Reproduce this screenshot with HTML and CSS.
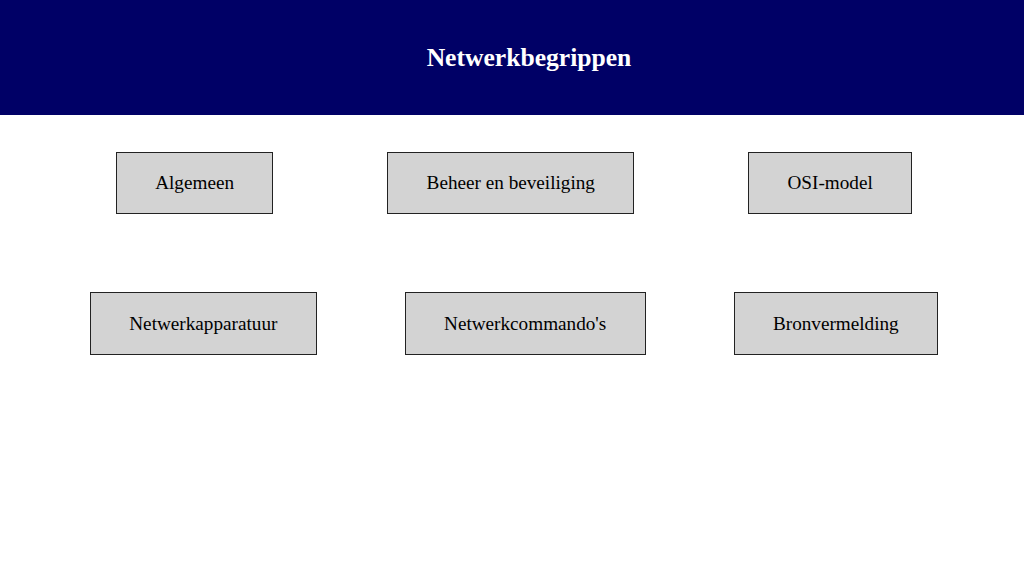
FILE: index.html
```html
<!DOCTYPE html>
<html lang="nl">
<head>
  <meta charset="UTF-8" />
  <meta name="viewport" content="width=device-width, initial-scale=1.0"/>
  <title>Netwerkbegrippen</title>
  <link rel="stylesheet" href="styles.css">
</head>
<body>
  <header>
    <h1>Netwerkbegrippen</h1>
  </header>

  <nav class="menu">
    <div class="menu-row">
      <a class="menu-item" href="#algemeen">Algemeen</a>
      <a class="menu-item" href="#beheer">Beheer en beveiliging</a>
      <a class="menu-item" href="#osi">OSI-model</a>
    </div>
    <div class="menu-row">
      <a class="menu-item" href="#apparatuur">Netwerkapparatuur</a>
      <a class="menu-item" href="#commandos">Netwerkcommando's</a>
      <a class="menu-item" href="#bronnen">Bronvermelding</a>
    </div>
  </nav>
</body>
</html>
```

FILE: styles.css
```css
html {
  overflow-x: scroll;
}

body {
  margin: 0;
  font-family: 'Liberation Serif', 'Times New Roman', serif;
  background: #fff;
  color: #000;
}

header {
  background-color: #000066;
  color: white;
  padding: 43px 0 42px;
}

header h1 {
  margin: 0;
  padding-left: 34px;
  text-align: center;
  font-size: 25.6px;
}

.menu {
  margin-top: 37px;
  display: flex;
  flex-direction: column;
  gap: 78px;
}

.menu-row {
  display: flex;
  justify-content: space-evenly;
  width: 100%;
  padding: 0 4px 0 2px;
}

.menu-item {
  font-size: 1.2em;
  padding: 1em 2em;
  background: lightgray;
  border: 1px solid #222;
  color: black;
  text-decoration: none;
}
```
